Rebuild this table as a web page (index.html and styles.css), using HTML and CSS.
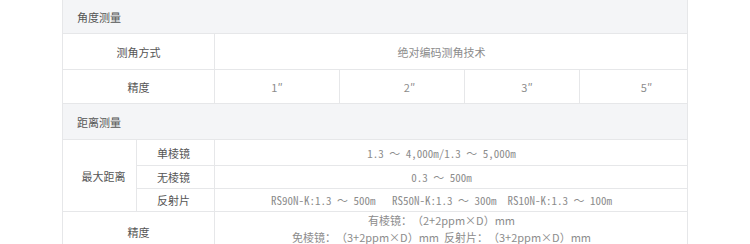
FILE: index.html
```html
<!DOCTYPE html>
<html lang="zh-CN">
<head>
<meta charset="utf-8">
<title>规格参数</title>
<link rel="stylesheet" href="styles.css">
</head>
<body>
<div class="spec">
  <div class="sec">角度测量</div>

  <div class="lab wide">测角方式</div>
  <div class="val">绝对编码测角技术</div>

  <div class="lab wide">精度</div>
  <div class="deg">1″</div>
  <div class="deg d2">2″</div>
  <div class="deg d3">3″</div>
  <div class="deg d4">5″</div>

  <div class="sec">距离测量</div>

  <div class="lab tall">最大距离</div>
  <div class="sub">单棱镜</div>
  <div class="val mono">1.3 ～ 4,000m/1.3 ～ 5,000m</div>
  <div class="sub">无棱镜</div>
  <div class="val mono">0.3 ～ 500m</div>
  <div class="sub">反射片</div>
  <div class="val mono">RS90N-K:1.3 ～ 500m&nbsp;&nbsp;&nbsp;RS50N-K:1.3 ～ 300m&nbsp;&nbsp;RS10N-K:1.3 ～ 100m</div>

  <div class="lab wide last">精度</div>
  <div class="val multi last">
    <span class="line">有棱镜：（2+2ppm×D）mm</span>
    <span class="line">免棱镜：（3+2ppm×D）mm&nbsp;&nbsp;反射片：（3+2ppm×D）mm</span>
  </div>
</div>
</body>
</html>
```
FILE: styles.css
```css
html, body {
  margin: 0;
  padding: 0;
  background: #ffffff;
}

body {
  font-family: "Noto Sans CJK SC", "Noto Sans", sans-serif;
  font-size: 11px;
  color: #555555;
  text-spacing-trim: space-all;
}

.spec {
  width: 626px;
  margin: 0 auto;
  box-sizing: border-box;
  padding: 0 1px 1px;
  background: #e6e7e9;
  display: grid;
  grid-template-columns: 73px 77px 124px 124px 114px 107px;
  grid-template-rows: 33px 35px 33px 35px 25px 22px 22px auto;
  gap: 1px;
}

.spec > div {
  background: #ffffff;
  display: flex;
  align-items: center;
  justify-content: center;
  line-height: 18px;
}

.sec {
  grid-column: 1 / -1;
  background: #f4f5f7 !important;
  justify-content: flex-start !important;
  padding-left: 14px;
  color: #555555;
}

.lab {
  color: #555555;
}

.wide {
  grid-column: span 2;
}

.tall {
  grid-row: span 3;
  padding-left: 8px;
}

.sub {
  padding-right: 4px;
}

.val {
  grid-column: span 4;
  padding-right: 19px;
  color: #8c8c8c;
}

.deg {
  color: #8c8c8c;
}

.d2 { padding-left: 15px; }
.d3 { padding-left: 10px; }
.d4 { padding-left: 26px; }

.mono {
  font-family: "Noto Sans Mono CJK SC", "DejaVu Sans Mono", monospace;
}

.multi {
  flex-direction: column;
  justify-content: flex-start !important;
  padding-bottom: 6px;
  min-height: 34px;
}

.line {
  display: block;
  white-space: nowrap;
  line-height: 17px;
}
```
